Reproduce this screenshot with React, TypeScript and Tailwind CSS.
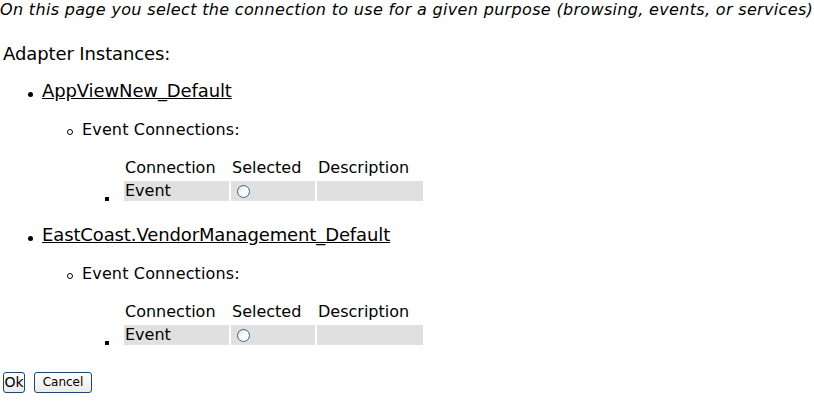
import React from "react";

function Disc() {
  return <span className="block w-[5px] h-[5px] rounded-full bg-black" />;
}

function Circle() {
  return <span className="block w-[6px] h-[6px] rounded-full border border-black" />;
}

function Radio() {
  return (
    <span className="block w-[13px] h-[13px] rounded-full border border-[#3a628f] bg-gradient-to-br from-[#dcdcd6] via-white to-white" />
  );
}

function ConnTable() {
  return (
    <div className="flex items-end pl-[105px]">
      <span className="block w-[4px] h-[4px] bg-black" />
      <div className="ml-[15px] grid grid-cols-[105px_84px_106px] grid-rows-[20px_20px] gap-x-[2px] gap-y-[3px]">
        <div className="pl-[1px] leading-[20px]">Connection</div>
        <div className="pl-[1px] leading-[20px]">Selected</div>
        <div className="pl-[1px] leading-[20px]">Description</div>
        <div className="pl-[1px] leading-[20px] bg-[#e0e0e0]">Event</div>
        <div className="pl-[6px] pt-[1px] bg-[#e0e0e0] flex items-center">
          <Radio />
        </div>
        <div className="bg-[#e0e0e0]" />
      </div>
    </div>
  );
}

function Instance({ name }: { name: string }) {
  return (
    <div>
      <div className="flex items-start pl-[28px] h-[21px]">
        <span className="mt-[12px]">
          <Disc />
        </span>
        <span className="ml-[9px] text-[18px] leading-[21px] tracking-[-0.12px] underline">{name}</span>
      </div>
      <div className="flex items-start pl-[67px] mt-[19px] h-[19px]">
        <span className="mt-[9px]">
          <Circle />
        </span>
        <span className="ml-[9px] leading-[19px] tracking-[0.15px]">Event Connections:</span>
      </div>
      <div className="mt-[19px]">
        <ConnTable />
      </div>
    </div>
  );
}

export default function App() {
  return (
    <div className="w-[814px] h-[401px] bg-white text-black font-['DejaVu_Sans',sans-serif] text-[16px] leading-[19px] overflow-hidden">
      <p className="italic leading-[19px] whitespace-nowrap tracking-[0.33px]">
        On this page you select the connection to use for a given purpose (browsing, events, or services)
      </p>
      <div className="mt-[24px] pl-[3px] text-[18px] leading-[21px] tracking-[-0.1px]">Adapter Instances:</div>
      <div className="mt-[16px]">
        <Instance name="AppViewNew_Default" />
      </div>
      <div className="mt-[23px]">
        <Instance name="EastCoast.VendorManagement_Default" />
      </div>
      <div className="mt-[27px] pl-[3px] flex gap-[9px]">
        <button className="w-[22px] h-[21px] rounded-[3px] border border-[#1c4478] bg-gradient-to-b from-white to-[#ecebe6] text-[14px] leading-[19px] text-black flex items-center justify-center p-0">
          Ok
        </button>
        <button className="w-[58px] h-[21px] rounded-[3px] border border-[#1c4478] bg-gradient-to-b from-white to-[#ecebe6] text-[12px] leading-[19px] text-black flex items-center justify-center p-0">
          Cancel
        </button>
      </div>
    </div>
  );
}
